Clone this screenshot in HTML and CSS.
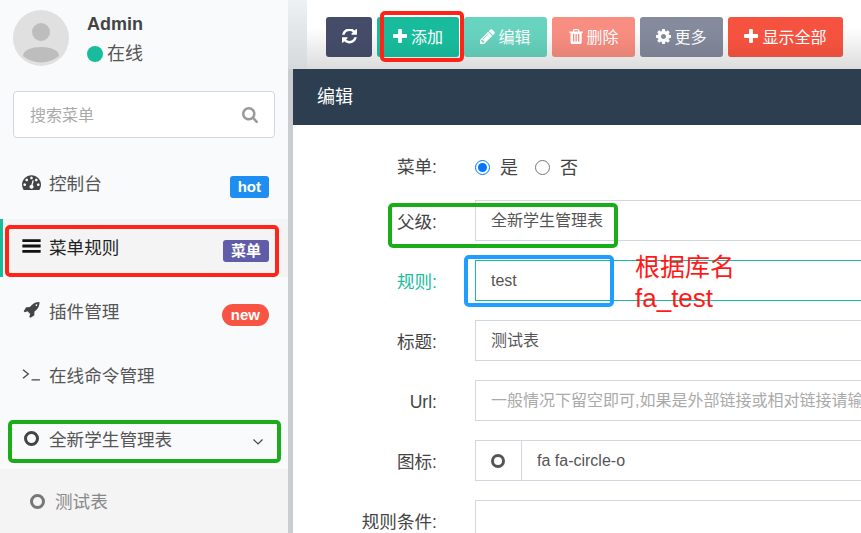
FILE: index.html
```html
<!DOCTYPE html>
<html lang="zh-CN">
<head>
<meta charset="utf-8">
<title>编辑</title>
<link rel="stylesheet" href="styles.css">
</head>
<body>
<svg class="defs" width="0" height="0">
    <symbol id="i-plus" viewBox="0 128 1408 1408"><path d="M1408 736v192q0 40-28 68t-68 28h-416v416q0 40-28 68t-68 28h-192q-40 0-68-28t-28-68v-416h-416q-40 0-68-28t-28-68v-192q0-40 28-68t68-28h416v-416q0-40 28-68t68-28h192q40 0 68 28t28 68v416h416q40 0 68 28t28 68z"/></symbol>
    <symbol id="i-pencil" viewBox="128 128 1536 1536"><path d="M491 1536l91-91-235-235-91 91v107h128v128h107zm523-928q0-22-22-22-10 0-17 7l-542 542q-7 7-7 17 0 22 22 22 10 0 17-7l542-542q7-7 7-17zm-54-192l416 416-832 832h-416v-416zm683 96q0 53-37 90l-166 166-416-416 166-165q36-38 90-38 53 0 91 38l235 234q37 39 37 91z"/></symbol>
    <symbol id="i-trash" viewBox="128 128 1408 1536"><path d="M704 1376v-704q0-14-9-23t-23-9h-64q-14 0-23 9t-9 23v704q0 14 9 23t23 9h64q14 0 23-9t9-23zm256 0v-704q0-14-9-23t-23-9h-64q-14 0-23 9t-9 23v704q0 14 9 23t23 9h64q14 0 23-9t9-23zm256 0v-704q0-14-9-23t-23-9h-64q-14 0-23 9t-9 23v704q0 14 9 23t23 9h64q14 0 23-9t9-23zm-544-992h448l-48-117q-7-9-17-11h-317q-10 2-17 11zm928 32v64q0 14-9 23t-23 9h-96v948q0 83-47 143.500t-113 60.500h-832q-66 0-113-58.500t-47-141.500v-952h-96q-14 0-23-9t-9-23v-64q0-14 9-23t23-9h309l70-167q15-37 54-63t79-26h320q40 0 79 26t54 63l70 167h309q14 0 23 9t9 23z"/></symbol>
    <symbol id="i-cog" viewBox="128 128 1536 1536"><path d="M1152 896q0-106-75-181t-181-75-181 75-75 181 75 181 181 75 181-75 75-181zm512-109v222q0 12-8 23t-20 13l-185 28q-19 54-39 91 35 50 107 138 10 12 10 25t-9 23q-27 37-99 108t-94 71q-12 0-26-9l-138-108q-44 23-91 38-16 136-29 186-7 28-36 28h-222q-14 0-24.500-8.500t-11.500-21.500l-28-184q-49-16-90-37l-141 107q-10 9-25 9-14 0-25-11-126-114-165-168-7-10-7-23 0-12 8-23 15-21 51-66.500t54-70.500q-27-50-41-99l-183-27q-13-2-21-12.500t-8-23.500v-222q0-12 8-23t19-13l186-28q14-46 39-92-40-57-107-138-10-12-10-24 0-10 9-23 26-36 98.500-107.500t94.500-71.500q13 0 26 10l138 107q44-23 91-38 16-136 29-186 7-28 36-28h222q14 0 24.500 8.500t11.500 21.500l28 184q49 16 90 37l142-107q9-9 24-9 13 0 25 10 129 119 165 170 7 8 7 22 0 12-8 23-15 21-51 66.500t-54 70.500q26 50 41 98l183 28q13 2 21 12.500t8 23.500z"/></symbol>
    <symbol id="i-refresh" viewBox="0 64 1536 1536"><path d="M1511 928q0 5-1 7-64 268-268 434.500t-478 166.500q-146 0-282.500-55t-243.500-157l-129 129q-19 19-45 19t-45-19-19-45v-448q0-26 19-45t45-19h448q26 0 45 19t19 45-19 45l-137 137q71 66 161 102t187 36q134 0 250-65t186-179q11-17 53-117 8-23 30-23h192q13 0 22.500 9.500t9.500 22.500zm25-800v448q0 26-19 45t-45 19h-448q-26 0-45-19t-19-45 19-45l138-138q-148-137-349-137-134 0-250 65t-186 179q-11 17-53 117-8 23-30 23h-199q-13 0-22.500-9.500t-9.500-22.500v-7q65-268 270-434.500t480-166.500q146 0 284 55.500t245 156.500l130-129q19-19 45-19t45 19 19 45z"/></symbol>
    <symbol id="i-gauge" viewBox="0 192 1792 1408"><path d="M384 1152q0-53-37.500-90.500t-90.500-37.500-90.500 37.500-37.500 90.500 37.500 90.500 90.500 37.500 90.500-37.500 37.500-90.500zm192-448q0-53-37.500-90.500t-90.500-37.500-90.500 37.500-37.500 90.500 37.500 90.500 90.500 37.500 90.500-37.500 37.500-90.500zm428 481l101-382q6-26-7.500-48.500t-38.500-29.500-48 6.500-30 39.500l-101 382q-60 5-107 43.500t-63 98.500q-20 77 20 146t117 89 146-20 89-117q16-60-6-117t-72-91zm660-33q0-53-37.500-90.500t-90.500-37.500-90.500 37.500-37.500 90.500 37.500 90.500 90.500 37.500 90.500-37.500 37.500-90.500zm-640-640q0-53-37.500-90.500t-90.500-37.500-90.500 37.500-37.500 90.500 37.500 90.500 90.500 37.500 90.500-37.500 37.500-90.500zm448 192q0-53-37.500-90.500t-90.500-37.500-90.500 37.500-37.500 90.500 37.500 90.500 90.500 37.500 90.500-37.500 37.500-90.500zm320 448q0 261-141 483-19 29-54 29h-1402q-35 0-54-29-141-221-141-483 0-182 71-348t191-286 286-191 348-71 348 71 286 191 191 286 71 348z"/></symbol>
    <symbol id="i-bars" viewBox="0 0 16 14"><path d="M0 1h16v2.600H0zM0 5.700h16v2.600H0zM0 10.400h16V13H0z"/></symbol>
    <symbol id="i-rocket" viewBox="64 128 1664 1664"><path d="M1504 448q0-40-28-68t-68-28-68 28-28 68 28 68 68 28 68-28 28-68zm224-288q0 249-75.500 430.500t-253.500 360.500q-81 80-195 176l-20 379q-2 16-16 26l-384 224q-7 4-16 4-12 0-23-9l-64-64q-13-14-8-32l85-276-281-281-276 85q-3 1-9 1-14 0-23-9l-64-64q-17-19-5-39l224-384q10-14 26-16l379-20q96-114 176-195 188-187 358-258t431-71q14 0 23 9t9 23z"/></symbol>
    <symbol id="i-search" viewBox="64 128 1664 1664"><path d="M1216 832q0-185-131.500-316.500t-316.500-131.500-316.500 131.500-131.500 316.500 131.500 316.500 316.500 131.500 316.500-131.500 131.500-316.500zm512 832q0 52-38 90t-90 38q-54 0-90-38l-343-342q-179 124-399 124-143 0-273.500-55.500t-225-150-150-225-55.500-273.500 55.500-273.500 150-225 225-150 273.500-55.500 273.500 55.500 225 150 150 225 55.500 273.500q0 220-124 399l343 343q37 37 37 90z"/></symbol>
</svg>

<aside class="sidebar">
    <div class="user">
        <svg class="avatar" viewBox="0 0 56 56">
            <circle cx="28" cy="28" r="28" fill="#e0e0e0"/>
            <circle cx="28" cy="22" r="9" fill="#bdbdbd"/>
            <path d="M10 46c0-12 36-12 36 0a28 28 0 0 1-36 0z" fill="#bdbdbd"/>
        </svg>
        <div class="user-info">
            <div class="user-name">Admin</div>
            <div class="user-status"><span class="dot"></span>在线</div>
        </div>
    </div>
    <div class="search">
        <span class="search-text">搜索菜单</span>
        <svg class="search-icon"><use href="#i-search"/></svg>
    </div>
    <ul class="menu">
        <li class="item">
            <svg class="ico"><use href="#i-gauge"/></svg><span class="name">控制台</span><span class="tag tag-blue">hot</span>
        </li>
        <li class="item active">
            <svg class="ico"><use href="#i-bars"/></svg><span class="name">菜单规则</span><span class="tag tag-purple">菜单</span>
        </li>
        <li class="item">
            <svg class="ico"><use href="#i-rocket"/></svg><span class="name">插件管理</span><span class="tag tag-red">new</span>
        </li>
        <li class="item">
            <svg class="ico ico-term" viewBox="0 0 18 14"><path d="M1 3l5 4-5 4M9 12.500h8"/></svg><span class="name">在线命令管理</span>
        </li>
        <li class="item">
            <span class="ring"></span><span class="name">全新学生管理表</span>
            <svg class="chev" viewBox="0 0 10 6"><path d="M.5 .5L5 5l4.500-4.500"/></svg>
        </li>
    </ul>
    <div class="submenu">
        <span class="ring ring-sub"></span><span class="sub-name">测试表</span>
    </div>
</aside>
<div class="divider"></div>

<main class="main">
    <div class="toolbar">
        <a class="btn btn-refresh"><svg class="btn-ico"><use href="#i-refresh"/></svg></a>
        <a class="btn btn-green"><svg class="btn-ico"><use href="#i-plus"/></svg>添加</a>
        <a class="btn btn-green faded"><svg class="btn-ico ico-big"><use href="#i-pencil"/></svg>编辑</a>
        <a class="btn btn-danger faded"><svg class="btn-ico ico-big"><use href="#i-trash"/></svg>删除</a>
        <a class="btn btn-more faded"><svg class="btn-ico ico-big"><use href="#i-cog"/></svg>更多</a>
        <a class="btn btn-danger btn-all"><svg class="btn-ico"><use href="#i-plus"/></svg>显示全部</a>
    </div>
    <div class="panel">
        <div class="panel-head">编辑</div>
        <form class="form">
            <div class="row row-radio">
                <label class="lbl">菜单:</label>
                <div class="radios">
                    <label><input type="radio" name="ismenu" checked>是</label>
                    <label><input type="radio" name="ismenu">否</label>
                </div>
            </div>
            <div class="row">
                <label class="lbl">父级:</label>
                <div class="input">全新学生管理表</div>
            </div>
            <div class="row">
                <label class="lbl lbl-ok">规则:</label>
                <div class="input input-ok">test</div>
            </div>
            <div class="row">
                <label class="lbl">标题:</label>
                <div class="input">测试表</div>
            </div>
            <div class="row">
                <label class="lbl">Url:</label>
                <div class="input placeholder">一般情况下留空即可,如果是外部链接或相对链接请输入</div>
            </div>
            <div class="row">
                <label class="lbl">图标:</label>
                <div class="input input-group">
                    <span class="addon"><span class="ring ring-addon"></span></span>
                    <span class="addon-val">fa fa-circle-o</span>
                </div>
            </div>
            <div class="row">
                <label class="lbl">规则条件:</label>
                <div class="input"></div>
            </div>
        </form>
    </div>
</main>

<!-- marks drawn over the screenshot -->
<div class="mark mark-red mark-add"></div>
<div class="mark mark-red mark-menu"></div>
<div class="mark mark-green mark-side"></div>
<div class="mark mark-green mark-parent"></div>
<div class="mark mark-blue mark-rule"></div>
<div class="note">根据库名<br><span class="note-en">fa_test</span></div>
</body>
</html>
```

FILE: styles.css
```css
html,body{margin:0;padding:0;height:100%;}
body{display:flex;height:533px;overflow:hidden;position:relative;font-family:"Liberation Sans","Noto Sans CJK SC",sans-serif;font-size:18px;color:#444;background:#fff;}
ul{list-style:none;margin:0;padding:0;}
.defs{position:absolute;}

.sidebar{width:288px;flex:none;background:#f9fafc;padding-top:10px;box-sizing:border-box;}
.divider{width:5px;flex:none;background:linear-gradient(#eef1f4,#d5d9dc 69px,#c9cdd0 69px);}

.user{display:flex;height:56px;padding-left:13px;}
.avatar{width:56px;height:56px;flex:none;}
.user-info{margin-left:18px;}
.user-name{font-weight:bold;font-size:18px;line-height:28px;}
.user-status{display:flex;align-items:center;font-size:18px;line-height:30px;color:#555;margin-top:1px;}
.dot{width:16px;height:16px;border-radius:50%;background:#18bc9c;margin-right:4px;}

.search{display:flex;justify-content:space-between;align-items:center;box-sizing:border-box;width:262px;height:47px;margin:25px 0 0 13px;padding:0 16px;background:#fff;border:1px solid #d2d6de;border-radius:4px;font-size:16px;color:#aaa;}
.search-text{margin-bottom:2px;}
.search-icon{width:16px;height:16px;fill:#999;}

.menu{margin-top:17px;}
.item{display:flex;align-items:center;height:58px;margin-bottom:6px;padding:0 19px 4px 22px;box-sizing:border-box;font-size:17.6px;color:#555;}
.item.active{background:#f4f4f5;border-left:3px solid #18bc9c;padding-left:19px;color:#222;}
.ico{width:19px;height:16px;flex:none;fill:#444;}
.active .ico{fill:#111;}
.ico-term{fill:none;stroke:#444;stroke-width:1.2;}
.name{margin-left:8px;}
.tag{margin-left:auto;margin-top:10px;padding:0 8px;height:22px;line-height:22px;border-radius:3px;font-size:15px;font-weight:bold;color:#fff;}
.tag-blue{background:#1e8ff0;}
.tag-purple{background:#605ca8;}
.tag-red{background:#f75444;border-radius:11px;padding:0 9px;}
.ring{width:15px;height:15px;box-sizing:border-box;flex:none;border:3px solid #444;border-radius:50%;margin:0 2px;}
.chev{width:10px;height:6px;margin:8px 6px 0 auto;fill:none;stroke:#444;stroke-width:1.2;}
.submenu{display:flex;align-items:center;height:64px;margin-top:-6px;padding:0 0 0 30px;background:#f4f4f5;font-size:17.6px;color:#888;}
.ring-sub{border-color:#777;margin:0 10px 0 0;}
.sub-name{margin-bottom:2px;}

.main{flex:1;min-width:0;overflow:hidden;}
.toolbar{display:flex;gap:5px;box-sizing:border-box;height:69px;padding:17px 0 0 33px;background:linear-gradient(#eef1f4,#d5d9dc) no-repeat left top/14px 100%,linear-gradient(#fff 40%,#dcdcdc);}
.btn{display:flex;align-items:center;justify-content:center;height:40px;padding-bottom:2px;border-radius:3px;font-size:16px;color:#fff;box-sizing:border-box;white-space:nowrap;background-image:linear-gradient(transparent 50%,rgba(0,0,0,.06));}
.btn-ico{width:14px;height:14px;fill:#fff;margin-right:4px;}
.ico-big{width:15px;height:15px;margin-right:3px;}
.btn-refresh{background-color:#444c69;width:46px;}
.btn-refresh .btn-ico{width:15px;height:15px;margin:0;}
.btn-green{background-color:#18bc9c;width:82px;}
.btn-green.faded{width:83px;}
.btn-danger{background-color:#f5533f;width:83px;}
.btn-more{background-color:#444c69;width:83px;}
.btn-all{width:115px;}
.btn.faded{opacity:.65;}

.panel-head{height:56px;line-height:56px;padding-left:24px;background:#2c3e50;color:#fff;font-size:18px;}
.form{padding-top:22px;}
.row{display:flex;margin-bottom:19px;}
.row-radio{height:41px;margin-bottom:12px;}
.lbl{width:144px;height:39px;padding-top:2px;flex:none;text-align:right;line-height:41px;font-size:17.6px;color:#444;}
.row-radio .lbl{padding-top:0;height:41px;}
.lbl-ok{color:#18bc9c;}
.input{flex:none;box-sizing:border-box;width:700px;height:41px;margin-left:38px;padding:0 15px;line-height:40px;background:#fff;border:1px solid #d2d6de;font-size:16px;color:#555;white-space:nowrap;overflow:hidden;}
.input-ok{border-color:#18bc9c;}
.placeholder{color:#aaa;}
.input-group{display:flex;padding:0;}
.addon{width:45px;flex:none;display:flex;align-items:center;justify-content:center;border-right:1px solid #d2d6de;}
.ring-addon{width:14px;height:14px;border-color:#555;margin:0 2px 0 0;}
.addon-val{padding-left:15px;}
.radios{display:flex;gap:17px;margin:0 0 4px 38px;align-items:center;}
.radios label{display:flex;align-items:center;font-size:18px;}
.radios input{width:15px;height:15px;margin:4px 10px 0 0;}

.mark{position:absolute;box-sizing:border-box;border-radius:5px;border:4px solid;}
.mark-red{border-color:#ff2318;}
.mark-green{border-color:#1aad19;}
.mark-blue{border-color:#1e9fff;}
.mark-add{left:380px;top:11px;width:84px;height:51px;}
.mark-menu{left:5px;top:225px;width:274px;height:52px;}
.mark-side{left:8px;top:420px;width:273px;height:43px;}
.mark-parent{left:388px;top:203px;width:230px;height:45px;}
.mark-rule{left:464px;top:255px;width:150px;height:52px;}
.note{position:absolute;left:635px;top:252px;font-size:25px;line-height:31px;color:#ff1a1a;}
.note-en{font-size:26px;}
```
